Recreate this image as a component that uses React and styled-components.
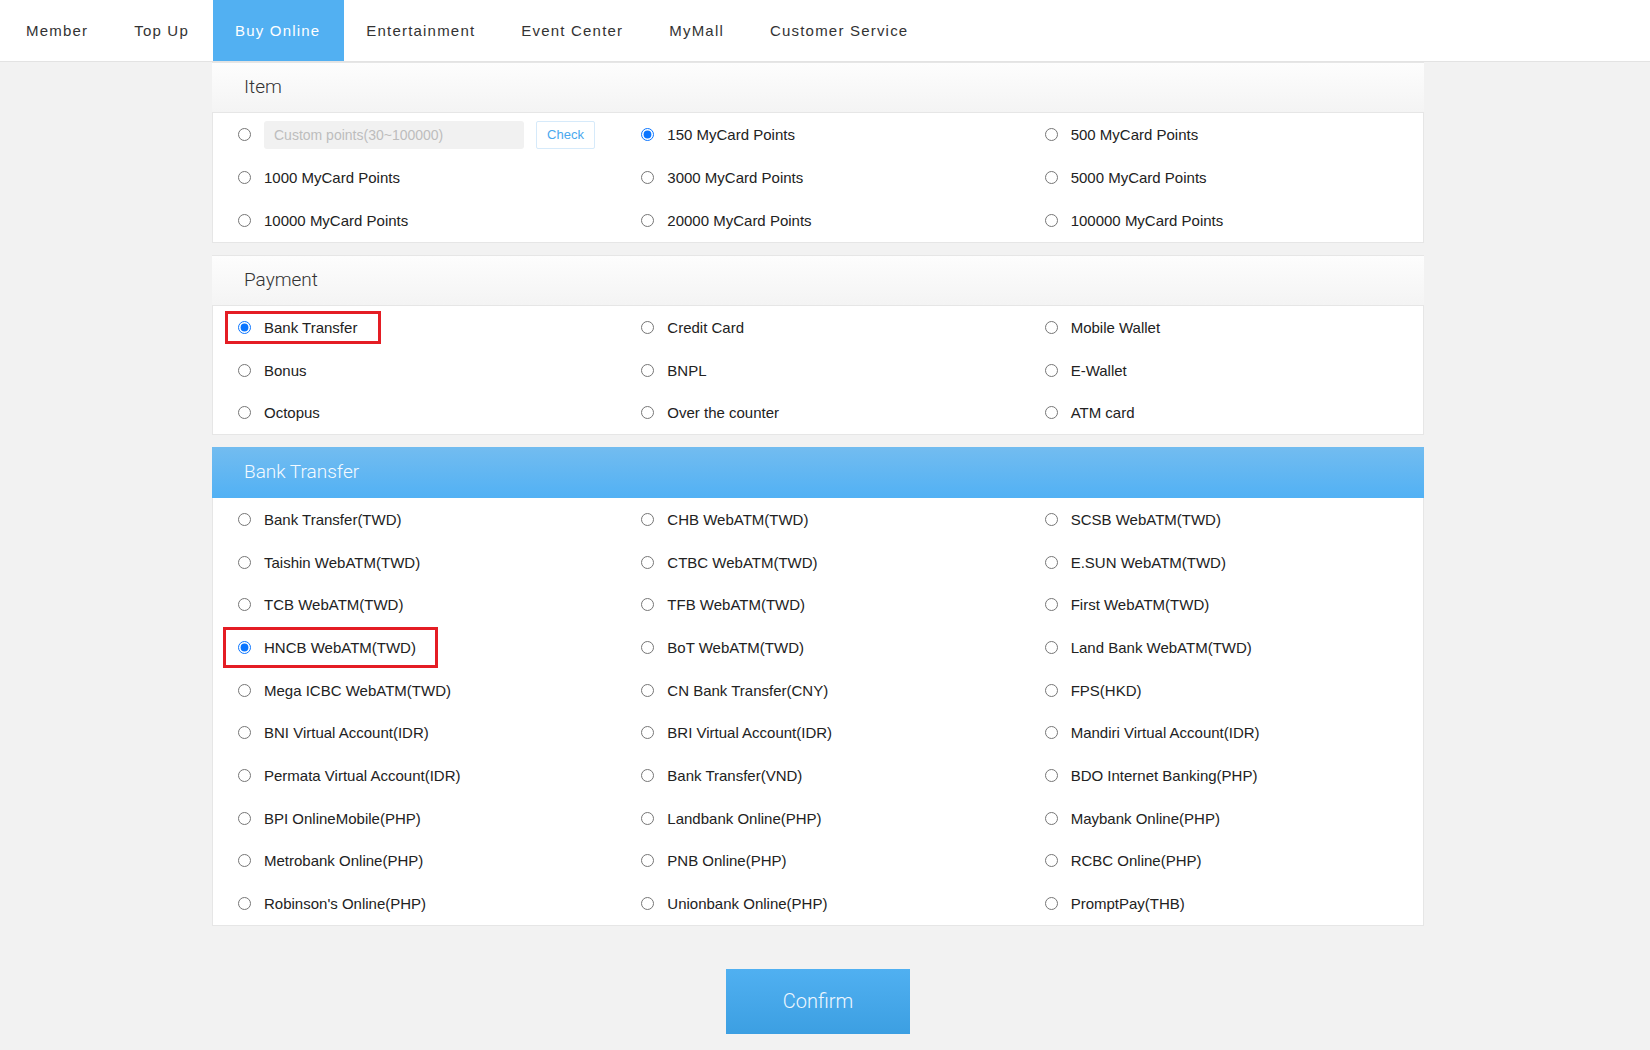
import React from 'react'
import styled, { createGlobalStyle } from 'styled-components'

const GlobalStyle = createGlobalStyle`
  html, body {
    margin: 0;
    padding: 0;
    background: #f2f2f2;
    font-family: "Liberation Sans", Arial, sans-serif;
    color: #222;
  }
`

const Page = styled.div`
  min-height: 1050px;
  background: #f2f2f2;
`

const Nav = styled.nav`
  display: flex;
  height: 62px;
  padding-left: 4px;
  background: #fff;
  border-bottom: 1px solid #e3e3e3;
  box-sizing: border-box;
`

const NavItem = styled.a`
  display: flex;
  align-items: center;
  padding: 0 24px 0 22px;
  font-size: 15px;
  letter-spacing: 1.2px;
  color: ${p => (p.$active ? '#fff' : '#333')};
  background: ${p => (p.$active ? '#52b0f2' : 'transparent')};
  text-decoration: none;
`

const Main = styled.main`
  width: 1212px;
  margin-left: 212px;
  display: flex;
  flex-direction: column;
  gap: 12px;
`

const Panel = styled.section`
  background: #fff;
  border: 1px solid #e6e6e6;
  border-top: none;
`

const PanelHead = styled.header`
  height: 51px;
  display: flex;
  align-items: center;
  padding-left: 32px;
  padding-bottom: 2px;
  box-sizing: border-box;
  font-family: Roboto, "Liberation Sans", sans-serif;
  font-weight: 300;
  font-size: 19px;
  color: ${p => (p.$blue ? '#f4faff' : '#333')};
  background: ${p =>
    p.$blue
      ? 'linear-gradient(to bottom, #72bcf0, #52b1f4)'
      : 'linear-gradient(to bottom, #fdfdfd, #f4f4f4)'};
  border-top: 1px solid ${p => (p.$blue ? '#72bcf0' : '#e6e6e6')};
  border-bottom: 1px solid ${p => (p.$blue ? '#52b1f4' : '#e6e6e6')};
  margin: 0 -1px;
`

const Grid = styled.div`
  display: grid;
  grid-template-columns: repeat(3, 1fr);
  grid-auto-rows: ${p => p.$row || '42.7px'};
`

const Cell = styled.div`
  display: flex;
  align-items: center;
  padding-left: 25px;
  gap: 12px;
`

const Option = styled.label`
  position: relative;
  display: inline-flex;
  align-items: center;
  font-size: 15px;
  color: #222;
  white-space: nowrap;

  ${p =>
    p.$mark &&
    `
    &::after {
      content: '';
      position: absolute;
      left: ${-p.$mark.l}px;
      right: ${-p.$mark.r}px;
      top: ${-p.$mark.y}px;
      bottom: ${-p.$mark.y}px;
      border: 3px solid #e41d24;
      pointer-events: none;
    }
  `}
`

const Radio = styled.input.attrs({ type: 'radio' })`
  width: 13px;
  height: 13px;
  margin: 0 ${p => (p.$tight ? '1px' : '13px')} 0 0;
  accent-color: #0a75ff;
`

const CustomInput = styled.input`
  width: 260px;
  height: 28px;
  box-sizing: border-box;
  border: none;
  border-radius: 3px;
  background: #f1f1f1;
  padding: 0 10px;
  font-family: "Liberation Sans", Arial, sans-serif;
  font-size: 14px;
  &::placeholder {
    color: #bdbdbd;
  }
`

const CheckButton = styled.button`
  width: 59px;
  height: 28px;
  border: 1px solid #d6eafa;
  border-radius: 2px;
  background: #fff;
  color: #4aa8ee;
  font-family: "Liberation Sans", Arial, sans-serif;
  font-size: 13px;
`

const Footer = styled.div`
  display: flex;
  justify-content: center;
  padding: 31px 0 20px;
`

const Confirm = styled.button`
  width: 184px;
  height: 65px;
  border: none;
  background: linear-gradient(to bottom, #50b0f1, #3c9fe2);
  color: #eef7ff;
  font-family: Roboto, "Liberation Sans", sans-serif;
  font-weight: 300;
  font-size: 20px;
`

const navItems = ['Member', 'Top Up', 'Buy Online', 'Entertainment', 'Event Center', 'MyMall', 'Customer Service']

const items = [
  null,
  '150 MyCard Points',
  '500 MyCard Points',
  '1000 MyCard Points',
  '3000 MyCard Points',
  '5000 MyCard Points',
  '10000 MyCard Points',
  '20000 MyCard Points',
  '100000 MyCard Points',
]

const payments = ['Bank Transfer', 'Credit Card', 'Mobile Wallet', 'Bonus', 'BNPL', 'E-Wallet', 'Octopus', 'Over the counter', 'ATM card']

const banks = [
  'Bank Transfer(TWD)', 'CHB WebATM(TWD)', 'SCSB WebATM(TWD)',
  'Taishin WebATM(TWD)', 'CTBC WebATM(TWD)', 'E.SUN WebATM(TWD)',
  'TCB WebATM(TWD)', 'TFB WebATM(TWD)', 'First WebATM(TWD)',
  'HNCB WebATM(TWD)', 'BoT WebATM(TWD)', 'Land Bank WebATM(TWD)',
  'Mega ICBC WebATM(TWD)', 'CN Bank Transfer(CNY)', 'FPS(HKD)',
  'BNI Virtual Account(IDR)', 'BRI Virtual Account(IDR)', 'Mandiri Virtual Account(IDR)',
  'Permata Virtual Account(IDR)', 'Bank Transfer(VND)', 'BDO Internet Banking(PHP)',
  'BPI OnlineMobile(PHP)', 'Landbank Online(PHP)', 'Maybank Online(PHP)',
  'Metrobank Online(PHP)', 'PNB Online(PHP)', 'RCBC Online(PHP)',
  "Robinson's Online(PHP)", 'Unionbank Online(PHP)', 'PromptPay(THB)',
]

const Choice = ({ name, label, checked, mark }) => (
  <Cell>
    <Option $mark={mark}>
      <Radio name={name} defaultChecked={checked} />
      {label}
    </Option>
  </Cell>
)

export default function App() {
  return (
    <Page>
      <GlobalStyle />
      <Nav>
        {navItems.map(n => (
          <NavItem key={n} $active={n === 'Buy Online'}>{n}</NavItem>
        ))}
      </Nav>
      <Main>
        <Panel>
          <PanelHead>Item</PanelHead>
          <Grid $row="43px">
            {items.map((it, i) =>
              it === null ? (
                <Cell key="custom">
                  <Radio name="item" $tight />
                  <CustomInput placeholder="Custom points(30~100000)" disabled />
                  <CheckButton>Check</CheckButton>
                </Cell>
              ) : (
                <Choice key={it} name="item" label={it} checked={i === 1} />
              )
            )}
          </Grid>
        </Panel>

        <Panel>
          <PanelHead>Payment</PanelHead>
          <Grid>
            {payments.map((p, i) => (
              <Choice
                key={p}
                name="pay"
                label={p}
                checked={i === 0}
                mark={i === 0 ? { y: 8, l: 13, r: 24 } : null}
              />
            ))}
          </Grid>
        </Panel>

        <Panel>
          <PanelHead $blue>Bank Transfer</PanelHead>
          <Grid>
            {banks.map(b => (
              <Choice
                key={b}
                name="bank"
                label={b}
                checked={b === 'HNCB WebATM(TWD)'}
                mark={b === 'HNCB WebATM(TWD)' ? { y: 12, l: 15, r: 22 } : null}
              />
            ))}
          </Grid>
        </Panel>

        <Footer>
          <Confirm>Confirm</Confirm>
        </Footer>
      </Main>
    </Page>
  )
}
